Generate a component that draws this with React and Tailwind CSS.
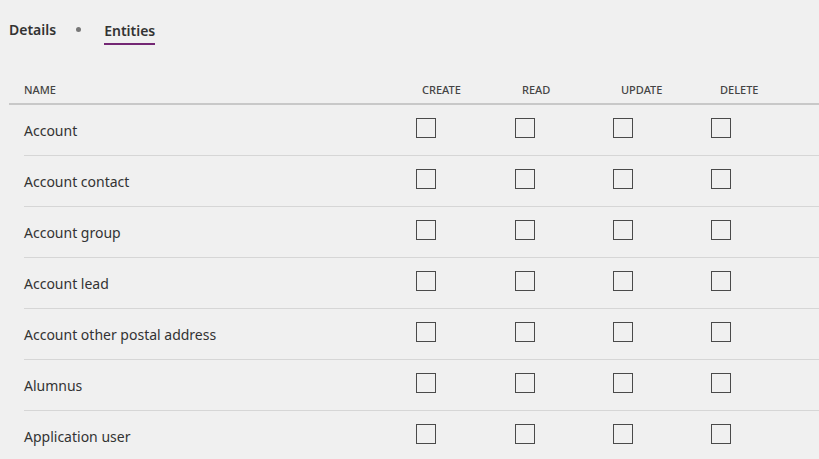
const entities = [
  "Account",
  "Account contact",
  "Account group",
  "Account lead",
  "Account other postal address",
  "Alumnus",
  "Application user",
]

const columns = ["Create", "Read", "Update", "Delete"]

function Box() {
  return <span className="mb-[4px] block h-[20px] w-[20px] border border-[#4a4a4a] bg-transparent" />
}

export default function App() {
  return (
    <div className="h-[459px] w-full overflow-hidden bg-[#f0f0f0] text-[#333] font-['Noto_Sans','Open_Sans',sans-serif]">
      <div className="flex items-center pl-[9px] pt-[17px]">
        <span className="pb-[5px] pt-[2px] text-[14px] font-semibold text-[#333]">Details</span>
        <span className="mb-[3px] ml-[20px] mr-[23px] block h-[5px] w-[5px] rounded-full bg-[#777]" />
        <span className="border-b-2 border-[#742774] pb-[2px] pt-[2px] text-[14px] font-semibold text-[#333]">
          Entities
        </span>
      </div>

      <div className="ml-[9px] mt-[31px]">
        <div className="grid h-[29px] grid-cols-[407px_99px_98px_98px_1fr] items-start border-b-2 border-[#c8c8c8] pt-[6px] text-[11px] font-medium uppercase text-[#444]">
          <div className="pl-[15px]">Name</div>
          {columns.map((c, i) => (
            <div key={c} className={i === 0 ? "pl-[6px]" : i === 1 ? "pl-[7px]" : i === 2 ? "pl-[8px]" : "pl-[9px]"}>
              {c}
            </div>
          ))}
        </div>

        {entities.map((name) => (
          <div
            key={name}
            className="ml-[15px] grid h-[51px] grid-cols-[392px_99px_98px_98px_1fr] items-center border-b border-[#d6d6d6]"
          >
            <div className="text-[14px] text-[#333]">{name}</div>
            <Box />
            <Box />
            <Box />
            <Box />
          </div>
        ))}
      </div>
    </div>
  )
}
